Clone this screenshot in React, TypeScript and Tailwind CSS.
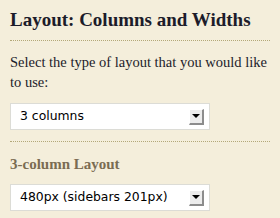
import React from 'react';

const SelectBox = ({ value }: { value: string }) => (
  <div className="w-[200px] h-[27px] bg-white border border-[#dcdcd6] flex items-center justify-between pl-[9px] pr-[5px]">
    <span className="text-[12.4px] text-black" style={{ fontFamily: '"DejaVu Sans", Verdana, sans-serif' }}>
      {value}
    </span>
    <div className="w-[15px] h-[16px] bg-[#ececec] border-r-2 border-b-2 border-[#8c8c8c] border-t border-l border-t-white border-l-white flex items-center justify-center">
      <div className="w-0 h-0 border-l-[4px] border-r-[4px] border-t-[4px] border-l-transparent border-r-transparent border-t-black" />
    </div>
  </div>
);

export default function App() {
  return (
    <div
      className="w-[280px] h-[218px] bg-[#f4eedb] px-[10px] pt-[9px] overflow-hidden"
      style={{ fontFamily: '"Liberation Serif", Georgia, serif' }}
    >
      <h2 className="text-[19px] font-bold text-[#1c1c2a] leading-[22px] pb-[9px] border-b border-dotted border-[#b3a878]">
        Layout: Columns and Widths
      </h2>
      <p className="text-[14.5px] text-[#1c1c2a] leading-[20px] mt-[11px]">
        Select the type of layout that you would like to use:
      </p>
      <div className="mt-[11px] pb-[11px] border-b border-dotted border-[#b3a878]">
        <SelectBox value="3 columns" />
      </div>
      <h3 className="text-[15px] font-bold text-[#7a6c52] leading-[18px] mt-[13px]">
        3-column Layout
      </h3>
      <div className="mt-[11px]">
        <SelectBox value="480px (sidebars 201px)" />
      </div>
    </div>
  );
}
